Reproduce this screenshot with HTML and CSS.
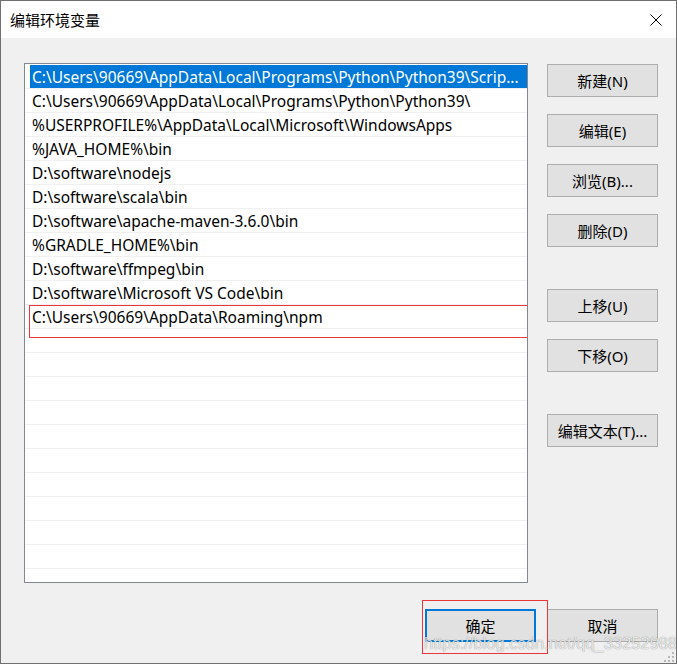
FILE: index.html
```html
<!DOCTYPE html>
<html>
<head>
<meta charset="utf-8">
<link rel="stylesheet" href="styles.css">
</head>
<body>
<div class="window">
  <div class="titlebar">
    <span class="title">编辑环境变量</span>
    <svg class="close" width="12" height="12" viewBox="0 0 12 12"><path d="M0.5 0.5 L11.5 11.5 M11.5 0.5 L0.5 11.5" stroke="#000" stroke-width="1" fill="none"/></svg>
  </div>
  <div class="content">
    <div class="main">
      <div class="list">
        <div class="row sel"><span class="cell">C:\Users\90669\AppData\Local\Programs\Python\Python39\Scrip...</span></div>
        <div class="row"><span class="cell">C:\Users\90669\AppData\Local\Programs\Python\Python39\</span></div>
        <div class="row"><span class="cell">%USERPROFILE%\AppData\Local\Microsoft\WindowsApps</span></div>
        <div class="row"><span class="cell">%JAVA_HOME%\bin</span></div>
        <div class="row"><span class="cell">D:\software\nodejs</span></div>
        <div class="row"><span class="cell">D:\software\scala\bin</span></div>
        <div class="row"><span class="cell">D:\software\apache-maven-3.6.0\bin</span></div>
        <div class="row"><span class="cell">%GRADLE_HOME%\bin</span></div>
        <div class="row"><span class="cell">D:\software\ffmpeg\bin</span></div>
        <div class="row"><span class="cell">D:\software\Microsoft VS Code\bin</span></div>
        <div class="row"><span class="cell">C:\Users\90669\AppData\Roaming\npm</span></div>
        <div class="row"><span class="cell"></span></div>
        <div class="row"><span class="cell"></span></div>
        <div class="row"><span class="cell"></span></div>
        <div class="row"><span class="cell"></span></div>
        <div class="row"><span class="cell"></span></div>
        <div class="row"><span class="cell"></span></div>
        <div class="row"><span class="cell"></span></div>
        <div class="row"><span class="cell"></span></div>
        <div class="row"><span class="cell"></span></div>
        <div class="row"><span class="cell"></span></div>
        <div class="row"><span class="cell"></span></div>
        <div class="editmark"></div>
      </div>
      <div class="side">
        <button class="btn">新建(N)</button>
        <button class="btn">编辑(E)</button>
        <button class="btn">浏览(B)...</button>
        <button class="btn">删除(D)</button>
        <button class="btn gap">上移(U)</button>
        <button class="btn">下移(O)</button>
        <button class="btn gap">编辑文本(T)...</button>
      </div>
    </div>
    <div class="footer">
      <button class="btn focus">确定</button>
      <button class="btn">取消</button>
    </div>
  </div>
  <div class="okmark"></div>
  <div class="watermark">https://blog.csdn.net/qq_33252988</div>
  <svg class="grip" width="12" height="12" viewBox="0 0 12 12">
    <rect x="9" y="1" width="2" height="2" fill="#b8b8b8"/>
    <rect x="5" y="5" width="2" height="2" fill="#b8b8b8"/>
    <rect x="9" y="5" width="2" height="2" fill="#b8b8b8"/>
    <rect x="1" y="9" width="2" height="2" fill="#b8b8b8"/>
    <rect x="5" y="9" width="2" height="2" fill="#b8b8b8"/>
    <rect x="9" y="9" width="2" height="2" fill="#b8b8b8"/>
  </svg>
</div>
</body>
</html>
```
FILE: styles.css
```css
* { box-sizing: border-box; }
html, body { margin: 0; padding: 0; background: #f0f0f0; }
body { font-family: "Noto Sans", "Noto Sans CJK SC", sans-serif; font-size: 15px; color: #000; }

.window {
  position: relative;
  width: 677px;
  height: 664px;
  border: 1px solid #707070;
  background: #f0f0f0;
  overflow: hidden;
}

.titlebar {
  height: 37px;
  background: #fff;
  display: flex;
  align-items: center;
  justify-content: space-between;
  padding: 0 14px 0 9px;
}
.title { font-size: 15px; line-height: 20px; }
.close { display: block; }

.content {
  padding: 25px 18px 0 23px;
}
.main {
  display: flex;
  gap: 19px;
}
.list {
  position: relative;
  width: 504px;
  height: 520px;
  border: 1px solid #828790;
  background: #fff;
  padding-top: 1px;
  overflow: hidden;
}
.row {
  height: 24px;
  border-bottom: 1px solid #f0f0f0;
  display: flex;
}
.cell {
  flex: 1;
  margin-left: 5px;
  padding: 1px 0 0 2px;
  font-size: 15.5px;
  line-height: 22px;
  height: 23px;
  white-space: nowrap;
  overflow: hidden;
}
.row.sel .cell { background: #0078d7; color: #fff; }

.editmark {
  position: absolute;
  left: 4px;
  top: 241px;
  width: 499px;
  height: 33px;
  border: 1px solid #e8363a;
  z-index: 2;
}

.side {
  display: flex;
  flex-direction: column;
  gap: 17px;
  padding-top: 1px;
}
.btn {
  width: 111px;
  height: 33px;
  background: #e1e1e1;
  border: 1px solid #adadad;
  font-family: "Noto Sans", "Noto Sans CJK SC", sans-serif;
  font-size: 15px;
  color: #000;
  padding: 0;
  margin: 0;
}
.btn.gap { margin-top: 25px; }
.btn.focus { border: 2px solid #0078d7; }

.footer {
  display: flex;
  justify-content: flex-end;
  gap: 11px;
  margin-top: 26px;
}

.okmark {
  position: absolute;
  left: 421px;
  top: 599px;
  width: 126px;
  height: 54px;
  border: 1px solid #e8363a;
}

.watermark {
  position: absolute;
  left: 423px;
  top: 633px;
  font-family: "Liberation Sans", sans-serif;
  font-size: 16.5px;
  color: rgba(255,255,255,0.8);
  text-shadow: 0 0 1px rgba(0,0,0,0.5);
  white-space: nowrap;
}

.grip {
  position: absolute;
  right: 1px;
  bottom: 0px;
}
```
